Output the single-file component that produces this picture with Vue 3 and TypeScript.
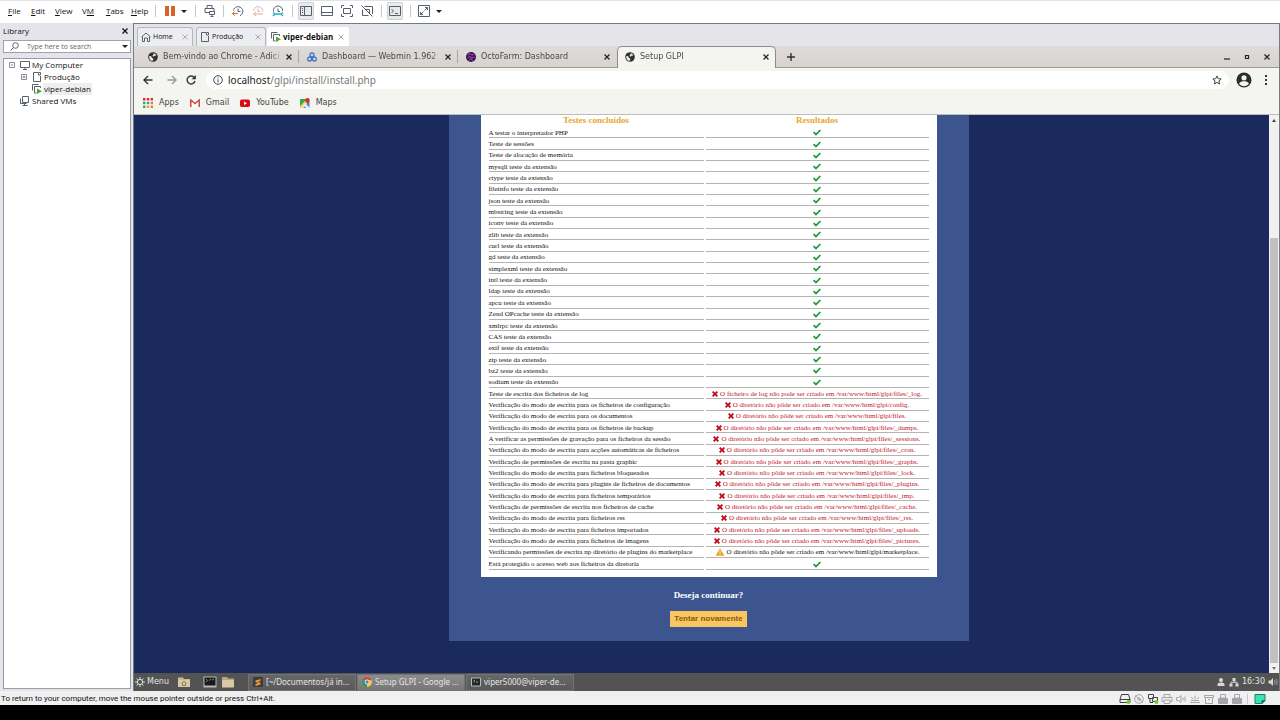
<script setup lang="ts">
import { ref } from 'vue'

type Status = 'ok' | 'error' | 'warning'
interface Check { label: string; status: Status; message?: string }

const menus = ['File', 'Edit', 'View', 'VM', 'Tabs', 'Help']
const accessKey: Record<string, number> = { File: 0, Edit: 0, View: 0, VM: 1, Tabs: 0, Help: 0 }

const search = ref('')
const address = ref('')

const ok = (label: string): Check => ({ label, status: 'ok' })
const fail = (label: string, path: string): Check => ({
  label,
  status: 'error',
  message: `O diretório não pôde ser criado em /var/www/html/glpi/${path}.`,
})

const extensions = ['mysqli', 'ctype', 'fileinfo', 'json', 'mbstring', 'iconv', 'zlib', 'curl', 'gd', 'simplexml', 'intl', 'ldap', 'apcu', 'Zend OPcache', 'xmlrpc', 'CAS', 'exif', 'zip', 'bz2', 'sodium']

const checks: Check[] = [
  ok('A testar o interpretador PHP'),
  ok('Teste de sessões'),
  ok('Teste de alocação de memória'),
  ...extensions.map((e) => ok(`${e} teste da extensão`)),
  { label: 'Teste de escrita dos ficheiros de log', status: 'error', message: 'O ficheiro de log não pode ser criado em /var/www/html/glpi/files/_log.' },
  fail('Verificação do modo de escrita para os ficheiros de configuração', 'config'),
  fail('Verificação do modo de escrita para os documentos', 'files'),
  fail('Verificação do modo de escrita para os ficheiros de backup', 'files/_dumps'),
  fail('A verificar as permissões de gravação para os ficheiros da sessão', 'files/_sessions'),
  fail('Verificação do modo de escrita para acções automáticas de ficheiros', 'files/_cron'),
  fail('Verificação de permissões de escrita na pasta graphic', 'files/_graphs'),
  fail('Verificação do modo de escrita para ficheiros bloqueados', 'files/_lock'),
  fail('Verificação do modo de escrita para plugins de ficheiros de documentos', 'files/_plugins'),
  fail('Verificação do modo de escrita para ficheiros temporários', 'files/_tmp'),
  fail('Verificação de permissões de escrita nos ficheiros de cache', 'files/_cache'),
  fail('Verificação do modo de escrita para ficheiros rss', 'files/_rss'),
  fail('Verificação do modo de escrita para ficheiros importados', 'files/_uploads'),
  fail('Verificação do modo de escrita para ficheiros de imagens', 'files/_pictures'),
  { label: 'Verificando permissões de escrita np diretório de plugins do marketplace', status: 'warning', message: 'O diretório não pôde ser criado em /var/www/html/glpi/marketplace.' },
  ok('Está protegido o acesso web aos ficheiros da diretoria'),
]

const browserTabs = [
  { title: 'Bem-vindo ao Chrome - Adici', icon: 'globe', active: false },
  { title: 'Dashboard — Webmin 1.962', icon: 'webmin', active: false },
  { title: 'OctoFarm: Dashboard', icon: 'octo', active: false },
  { title: 'Setup GLPI', icon: 'globe', active: true },
]

const tasks = [
  { title: '[~/Documentos/já in...', icon: 'sublime', active: false },
  { title: 'Setup GLPI - Google ...', icon: 'chrome', active: true },
  { title: 'viper5000@viper-de...', icon: 'term', active: false },
]
</script>

<template>
  <div class="app">
    <header class="menubar">
      <nav class="menus">
        <button v-for="m in menus" :key="m" type="button">{{ m.slice(0, accessKey[m]) }}<u>{{ m[accessKey[m]] }}</u>{{ m.slice(accessKey[m] + 1) }}</button>
      </nav>
      <div class="tools">
        <i class="sep"></i>
        <button type="button" class="pause" aria-label="Suspend"><i></i><i></i></button>
        <button type="button" class="drop power" aria-label="Power options"><i class="caret"></i></button>
        <i class="sep"></i>
        <button type="button" class="tool send" aria-label="Send keys">
          <svg viewBox="0 0 12 12"><path d="M3 3.500V.5h5v3M1 7.500v-4h9V6M1 7.500h4M5.500 6.500h5v3h-5zM8 9.500v2M6.500 11.500h3" /></svg>
        </button>
        <i class="sep"></i>
        <button type="button" class="tool clock" aria-label="Take snapshot">
          <svg viewBox="0 0 12 12"><path d="M1.500 5.500A4.700 4.700 0 1 1 8 10.700M6 3.500v3h2.500" /><path class="orange" d="M.5 8.500h5.500M2.500 6.500L.5 8.500l2 2" /></svg>
        </button>
        <button type="button" class="tool clock" aria-label="Revert snapshot">
          <svg viewBox="0 0 12 12"><path class="faint" d="M1.500 5.500A4.700 4.700 0 0 1 10.800 6.500M6 3.500v3h2" /><path class="peach" d="M1.500 9h9.500M4 7L1.500 9 4 11" /></svg>
        </button>
        <button type="button" class="tool clock" aria-label="Manage snapshots">
          <svg viewBox="0 0 12 12"><path d="M1.500 6.500A4.600 4.600 0 1 1 10.600 6M6 3.500v3h2" /><path class="teal" d="M1 7.500l2 1.500h6l2-1.500M1 11l2-2M9 9l2 2" /></svg>
        </button>
        <i class="sep"></i>
        <button type="button" class="tool boxed" aria-label="Show library">
          <svg viewBox="0 0 12 12"><path d="M.5 1.500h11v9H.5zM4.500 1.500v9M2 3.500h1M2 5.500h1M2 7.500h1" /></svg>
        </button>
        <button type="button" class="tool" aria-label="Show thumbnail bar">
          <svg viewBox="0 0 12 12"><path d="M.5 1.500h11v9H.5zM.5 7.500h11" /></svg>
        </button>
        <button type="button" class="tool" aria-label="Full screen">
          <svg viewBox="0 0 12 12"><path d="M.5 3V.5H3M9 .5h2.500V3M11.500 9v2.500H9M3 11.500H.5V9M2.500 3.500h7v5h-7z" /></svg>
        </button>
        <button type="button" class="tool" aria-label="Unity mode">
          <svg viewBox="0 0 12 12"><path d="M1.500 4.500v6h6M3.500 1.500h8V9M4.500 4.500h4v4M.5.500l11 11" /></svg>
        </button>
        <i class="sep"></i>
        <button type="button" class="tool boxed" aria-label="Console view">
          <svg viewBox="0 0 12 12"><path d="M.5 1.500h11v9H.5zM2.500 4l2 2-2 2M6 8.500h3" /></svg>
        </button>
        <i class="sep"></i>
        <button type="button" class="tool" aria-label="Stretch guest">
          <svg viewBox="0 0 12 12"><path d="M.5.5h11v11H.5zM7 2.500h2.500V5M9.500 2.500l-3 3M2.500 7v2.500H5M2.500 9.500l3-3" /></svg>
        </button>
        <button type="button" class="drop" aria-label="Stretch options"><i class="caret"></i></button>
      </div>
    </header>

    <div class="body">
      <aside class="library">
        <div class="libhead"><span>Library</span><button type="button" aria-label="Close library"><svg viewBox="0 0 6 6"><path d="M.5.5l5 5M5.500.5l-5 5" /></svg></button></div>
        <div class="search">
          <svg viewBox="0 0 9 9"><circle cx="5.500" cy="3.500" r="2.800" /><path d="M3.500 5.500L.5 8.500" /></svg>
          <input v-model="search" type="text" placeholder="Type here to search" aria-label="Type here to search" />
          <button type="button" aria-label="Search options"><i class="caret"></i></button>
        </div>
        <ul class="tree">
          <li>
            <span class="toggle"><svg viewBox="0 0 6 6"><path d="M.5.5h5v5h-5zM2 3h2" /></svg></span>
            <svg class="ti" viewBox="0 0 10 10"><path d="M.5 1.500h9v6h-9zM3 9.500h4M5 7.500v2" /></svg><span>My Computer</span>
          </li>
          <li class="child">
            <span class="toggle"><svg viewBox="0 0 6 6"><path d="M.5.5h5v5h-5zM1.500 3h3M3 1.500v3" /></svg></span>
            <svg class="ti" viewBox="0 0 10 10"><path d="M6 .5H1.500v9h7V4M6.500.5h2v2.500h-2z" /></svg><span>Produção</span>
          </li>
          <li class="child">
            <span class="toggle"></span>
            <svg class="ti" viewBox="0 0 10 10"><path d="M.5 6.500v-6h6M2.500 9V2.500h6V4M2.500 9h2" /><path class="play" d="M5 4.500v5.500l5-2.700z" /></svg><span class="chosen">viper-debian</span>
          </li>
          <li>
            <span class="toggle"></span>
            <svg class="ti" viewBox="0 0 10 10"><path d="M2.500.5h6v6h-6zM.5 2.500v5h6M4.500 7.500v2M2.500 9.500h5" /></svg><span>Shared VMs</span>
          </li>
        </ul>
      </aside>

      <main class="work">
        <div class="vmtabs">
          <div class="vmtab home">
            <svg class="ti" viewBox="0 0 10 10"><path d="M.5 5L5 1l4.500 4M1.500 4.500v5h2v-3.500h3v3.500h2v-5" /></svg><span>Home</span><button type="button" aria-label="Close Home"><svg viewBox="0 0 6 6"><path d="M.5.5l5 5M5.500.5l-5 5" /></svg></button>
          </div>
          <div class="vmtab prod">
            <svg class="ti" viewBox="0 0 10 10"><path d="M6 .5H1.500v9h7V4M6.500.5h2v2.500h-2z" /></svg><span>Produção</span><button type="button" aria-label="Close Produção"><svg viewBox="0 0 6 6"><path d="M.5.5l5 5M5.500.5l-5 5" /></svg></button>
          </div>
          <div class="vmtab current">
            <svg class="ti" viewBox="0 0 10 10"><path d="M.5 6.500v-6h6M2.500 9V2.500h6V4M2.500 9h2" /><path class="play" d="M5 4.500v5.500l5-2.700z" /></svg><span>viper-debian</span><button type="button" aria-label="Close viper-debian"><svg viewBox="0 0 6 6"><path d="M.5.5l5 5M5.500.5l-5 5" /></svg></button>
          </div>
        </div>

        <div class="guest">
          <div class="strip">
            <div v-for="t in browserTabs" :key="t.title" class="tab" :class="{ active: t.active }">
              <svg v-if="t.icon === 'globe'" viewBox="0 0 10 10"><circle cx="5" cy="5" r="4.800" fill="#2d2f31" /><path d="M1.200 4.200c1.500-.4 2.300.3 2.600 1.200.4.700 1.500.5 1.600 1.500 0 .8-.9 1-.8 2.100C2.500 8.900 1 7 1.200 4.200zM5.800 1.200c1 .2 2 .9 2.600 1.900-.7.900-1.500.5-2.200 1.100-.8.500-1.700.1-1.600-.8.300-1 1.300-1 1.200-2.200z" fill="#e8e6e3" /></svg>
              <svg v-else-if="t.icon === 'webmin'" viewBox="0 0 10 10" fill="#9dbcf0" stroke="#3b6fc4" stroke-width="1.200"><path d="M5 .7l1.900 1.200v2.200L5 5.200 3.100 4.100V1.900zM2.700 4.800l1.800 1.100v2.200L2.700 9.200.8 8.100V5.900zM7.300 4.800l1.900 1.100v2.200L7.300 9.200 5.500 8.100V5.900z" /></svg>
              <svg v-else viewBox="0 0 10 10"><circle cx="5" cy="5" r="5" fill="#3a1450" /><path d="M2 3l2-1.500L5.500 3 8 2.500M1.500 6L4 4.500 6 6l2.500-1M3 8.500l1.500-1.800L7 8.500" fill="none" stroke="#b45ac8" stroke-width="0.900" /></svg>
              <span>{{ t.title }}</span>
              <button type="button" :aria-label="'Close ' + t.title"><svg viewBox="0 0 6 6"><path d="M.5.5l5 5M5.500.5l-5 5" /></svg></button>
            </div>
            <button type="button" class="plus" aria-label="New tab"><svg viewBox="0 0 8 8"><path d="M4 0v8M0 4h8" /></svg></button>
            <div class="winbtns">
              <button type="button" aria-label="Minimize"><svg viewBox="0 0 6 6"><path d="M0 5h6" /></svg></button>
              <button type="button" aria-label="Maximize"><svg viewBox="0 0 6 6"><path d="M1.500 1.500h3v3h-3z" /></svg></button>
              <button type="button" aria-label="Close window"><svg viewBox="0 0 6 6"><path d="M.5.5l5 5M5.500.5l-5 5" /></svg></button>
            </div>
          </div>

          <div class="toolbar">
            <button type="button" aria-label="Back"><svg viewBox="0 0 10 10"><path d="M9.500 5H1M5 1L1 5l4 4" /></svg></button>
            <button type="button" class="dim" aria-label="Forward"><svg viewBox="0 0 10 10"><path d="M.5 5H9M5 1l4 4-4 4" /></svg></button>
            <button type="button" class="reload" aria-label="Reload"><svg viewBox="0 0 10 10"><path d="M8.300 2.500A4 4 0 1 0 9 6" /><path class="solid" d="M9.800 0v4.200H5.600z" /></svg></button>
            <div class="omnibox">
              <svg viewBox="0 0 10 10"><circle cx="5" cy="5" r="4.300" /><path d="M5 4.300v3.200M5 2.400v1" /></svg>
              <label class="url"><span>localhost<em>/glpi/install/install.php</em></span><input v-model="address" type="text" aria-label="Address" /></label>
              <button type="button" aria-label="Bookmark this page"><svg viewBox="0 0 10 10"><path d="M5 .9l1.200 2.800 3 .3-2.300 2 .7 3L5 7.400 2.400 9l.7-3L.8 4l3-.3z" /></svg></button>
            </div>
            <button type="button" class="avatar" aria-label="Profile"><svg viewBox="0 0 16 16"><circle cx="8" cy="8" r="7.500" fill="#2b2c2e" /><circle cx="8" cy="5.800" r="2.600" fill="#f4f4f0" /><path d="M3 11.800C4 9.600 6 9.300 8 9.300s4 .3 5 2.500c-1.300 1.600-3 2.400-5 2.400s-3.700-.8-5-2.400z" fill="#f4f4f0" /></svg></button>
            <button type="button" class="dots" aria-label="Chrome menu"><i></i><i></i><i></i></button>
          </div>

          <nav class="bookmarks">
            <a href="#apps"><svg viewBox="0 0 10 10"><path fill="#d93025" d="M0 0h2.400v2.400H0zM3.800 0h2.400v2.400H3.800zM7.600 0H10v2.400H7.600z" /><path fill="#34a853" d="M0 3.800h2.400v2.400H0z" /><path fill="#4285f4" d="M3.800 3.800h2.400v2.400H3.800z" /><path fill="#d98c25" d="M7.600 3.800H10v2.400H7.600zM7.600 7.600H10V10H7.600z" /><path fill="#34a853" d="M0 7.600h2.400V10H0z" /><path fill="#e0a82e" d="M3.800 7.600h2.400V10H3.800z" /></svg>Apps</a>
            <a href="#gmail"><svg viewBox="0 0 10 10"><path fill="#fff" d="M0 1.500h10v7.500H0z" /><path fill="none" stroke="#d5453a" stroke-width="1.500" d="M.8 9V2L5 5.500 9.200 2v7" /></svg>Gmail</a>
            <a href="#youtube"><svg viewBox="0 0 10 10"><rect y="1.500" width="10" height="7.500" rx="1.800" fill="#d80c18" /><path d="M4 3.500v3.500l3-1.750z" fill="#fff" /></svg>YouTube</a>
            <a href="#maps"><svg viewBox="0 0 10 10"><path fill="#34a853" d="M0 1h8L0 9z" /><path fill="#4285f4" d="M9.500 3v7H3z" /><path fill="#f2d04b" d="M0 8l7-7 2 1-8 8H0z" /><path fill="#e8eaed" d="M3 7l2-2 5 5H6z" /><path fill="#d93025" d="M7.500 0A2.300 2.300 0 0 1 9.800 2.300C9.800 4 8 4.500 7.500 6.500 7 4.500 5.200 4 5.200 2.300A2.300 2.300 0 0 1 7.500 0z" /></svg>Maps</a>
          </nav>

          <div class="viewport">
            <div class="page">
              <section class="panel">
                <div class="sheet">
                  <table>
                    <colgroup><col class="c1" /><col class="c2" /></colgroup>
                    <thead><tr><th scope="col">Testes concluídos</th><th scope="col">Resultados</th></tr></thead>
                    <tbody>
                      <tr v-for="c in checks" :key="c.label">
                        <td>{{ c.label }}</td>
                        <td>
                          <div class="result" :class="c.status">
                            <svg v-if="c.status === 'ok'" viewBox="0 0 8 7" role="img" aria-label="OK"><path d="M0 3.800l1.200-1.200 1.800 1.700L6.800.4 8 1.600 3 6.700z" fill="#1f9a3a" /></svg>
                            <svg v-else-if="c.status === 'error'" class="x" viewBox="0 0 6 6" role="img" aria-label="Erro"><path d="M0 1.300L1.300 0 3 1.700 4.700 0 6 1.300 4.300 3 6 4.700 4.700 6 3 4.300 1.300 6 0 4.700 1.700 3z" fill="#c00a1c" /></svg>
                            <svg v-else class="warn" viewBox="0 0 10 9" role="img" aria-label="Aviso"><path d="M5 .2L9.900 8.800H.1z" fill="#f0a020" /><path d="M5 3v3M5 6.800v1" stroke="#fff" /></svg>
                            <span v-if="c.message">{{ c.message }}</span>
                          </div>
                        </td>
                      </tr>
                    </tbody>
                  </table>
                </div>
                <h3>Deseja continuar?</h3>
                <button type="button" class="retry">Tentar novamente</button>
              </section>
            </div>
            <div class="scroll"><i class="arrow up"></i><div class="track"><div class="thumb"></div></div><i class="arrow"></i></div>
          </div>

          <div class="taskbar">
            <button type="button" class="start"><svg viewBox="0 0 10 10"><circle cx="5" cy="5" r="2.600" /><path d="M5 0v2M5 8v2M0 5h2M8 5h2M1.500 1.500l1.400 1.400M7.100 7.100l1.400 1.400M8.500 1.500L7.100 2.900M2.900 7.100L1.500 8.500" /></svg>Menu</button>
            <div class="launch">
              <button type="button" aria-label="Home folder"><svg viewBox="0 0 14 12"><path d="M1 1.500h5l1 1.500h6v8H1z" fill="#cbb994" /><path d="M1 4h12v7H1z" fill="#d9c8a4" /><path d="M4.500 7.500L7 5.500l2.500 2M5.500 7.500v2h3v-2" fill="none" stroke="#85775a" /></svg></button>
              <button type="button" aria-label="Terminal"><svg viewBox="0 0 14 12"><path d="M.5.5h13v11H.5z" fill="#b8bab6" /><path d="M1.500 1.500h11v8h-11z" fill="#161c1d" /><path d="M3 3l1.500 1.500L3 6M6 4.500l2-1.500M9 4l2-1" fill="none" stroke="#8fb08c" stroke-width="0.800" /></svg></button>
              <button type="button" aria-label="Files"><svg viewBox="0 0 14 12"><path d="M1 1h5l1 1.500h6V11H1z" fill="#b9a67f" /><path d="M1 4h12v7.500H1z" fill="#d9c8a4" /></svg></button>
            </div>
            <button v-for="t in tasks" :key="t.title" type="button" class="task" :class="{ on: t.active }">
              <svg v-if="t.icon === 'sublime'" viewBox="0 0 10 10"><rect width="10" height="10" rx="1" fill="#3b3b3b" /><path d="M2.500 3.500L7.500 2v2L4.500 5l3 .8V7.500l-5 1.500V7l3-1-3-.8z" fill="#f29a2e" /></svg>
              <svg v-else-if="t.icon === 'chrome'" viewBox="0 0 10 10"><path d="M5 5L.7 2.500a5 5 0 0 1 8.600 0z" fill="#db4437" /><path d="M5 5l4.300-2.500A5 5 0 0 1 5 10z" fill="#f4c53a" /><path d="M5 5v5A5 5 0 0 1 .7 2.500z" fill="#2b9c55" /><circle cx="5" cy="5" r="2.400" fill="#fff" /><circle cx="5" cy="5" r="1.800" fill="#4a84e0" /></svg>
              <svg v-else viewBox="0 0 10 10"><path d="M.5 1h9v8h-9z" fill="#24292a" stroke="#b8bab6" /><path d="M2.500 3l1.500 1-1.500 1M5 5h2" fill="none" stroke="#a9c2a5" stroke-width="0.800" /></svg>
              <span>{{ t.title }}</span>
            </button>
            <div class="tray">
              <svg viewBox="0 0 10 10"><circle cx="5" cy="3" r="2" /><path d="M1.500 9V7.500C1.500 6 3 5.500 5 5.500s3.500.5 3.500 2V9z" /></svg>
              <svg viewBox="0 0 10 10"><path d="M3.500 1h3v3h-3zM.5 6.500h3v3h-3zM6.500 6.500h3v3h-3z" /><path d="M5 4v1.200M2 6.500V5.300h6v1.200" fill="none" stroke="#d8d8d8" /></svg>
              <time>16:30</time>
              <svg viewBox="0 0 10 10"><path d="M.5 3.500h2l2.500-2.500v8L2.500 6.500h-2z" /><path d="M6.300 3.200c.8 1 .8 2.600 0 3.600M8 2c1.400 1.600 1.400 4.400 0 6" fill="none" stroke="#a5a5a5" /></svg>
            </div>
          </div>
        </div>
      </main>
    </div>

    <footer class="status">
      <span>To return to your computer, move the mouse pointer outside or press Ctrl+Alt.</span>
      <div class="devices">
        <svg viewBox="0 0 12 10"><path d="M2.500.5h7l1.500 5v3H1v-3zM1 5.500h10" /><circle class="led" cx="9.500" cy="8" r="1.900" /></svg>
        <svg class="off" viewBox="0 0 12 10"><circle cx="6" cy="5" r="4.300" /><circle cx="6" cy="5" r="1.300" /><path d="M2 1.500l8 7" /></svg>
        <svg viewBox="0 0 12 10"><path d="M1.500.5h5v4h-5zM5.500 3.500h5v4h-5zM3 4.500v4h3" /><circle class="led" cx="9.500" cy="8" r="1.900" /></svg>
        <svg class="off" viewBox="0 0 12 10"><path d="M3 3.500v-3h6v3M3 7.500H1v-4h10v4H9M3 6h6v3.500H3z" /></svg>
        <svg class="off" viewBox="0 0 12 10"><path d="M1.500 3.500h2L6 1.500v7l-2.500-2h-2zM8 3.500v3M10 2.500v5" /></svg>
        <svg class="off" viewBox="0 0 12 10"><path d="M1 8.500h10M2 6.500h8M6 1.500v4M2 3l2 2M10 3L8 5" /></svg>
        <svg class="off" viewBox="0 0 12 10"><path d="M1.500 1.500h9v2h-9zM2.500 3.500v6h7v-6M5 5.500h2" /></svg>
        <svg class="off usb" viewBox="0 0 12 10"><path d="M3.500.5h5V4h-5z" /><path class="fill" d="M1.500 4.500h9v5h-9z" /></svg>
        <svg class="off usb" viewBox="0 0 12 10"><path d="M3.500.5h5V4h-5z" /><path class="fill" d="M1.500 4.500h9v5h-9z" /></svg>
        <i class="sep"></i>
        <svg class="note" viewBox="0 0 12 10"><path d="M1 .5h10v6l-3 3H1z" fill="#3fe0b0" stroke="#14806a" /><path d="M8 9.500v-3h3z" fill="#17594d" stroke="#14806a" /></svg>
      </div>
    </footer>
  </div>
</template>

<style>
body { margin: 0; background: #000; }
</style>

<style scoped>
.app {
  display: flex;
  flex-direction: column;
  box-sizing: border-box;
  height: 100vh;
  padding-bottom: 15px;
  background: #000;
  color: #111;
  font: 8px/12px "Open Sans", "Noto Sans", sans-serif;
  overflow: hidden;
}
button { border: 0; padding: 0; margin: 0; background: none; font: inherit; color: inherit; display: flex; align-items: center; justify-content: center; }
svg { display: block; flex: none; fill: none; }
i { display: block; flex: none; }
input { border: 0; padding: 0; background: none; font: inherit; outline: 0; min-width: 0; }
.caret { border: 3px solid transparent; border-top-color: #222; border-bottom: 0; }

.menubar { display: flex; align-items: center; height: 23px; box-sizing: border-box; padding-bottom: 2px; border-top: 1px solid #e2e2e2; background: #fff; }
.menus { display: grid; grid-template-columns: 23px 24px 27px 24px 25px 24px; padding-left: 8px; }
.menus button { justify-content: flex-start; white-space: pre; }
.tools { display: flex; align-items: center; }
.sep { width: 1px; height: 12px; background: #c8c8c8; }
.pause { width: 28px; gap: 2px; }
.pause i { width: 4px; height: 10px; background: #d9622b; }
.drop { width: 10px; height: 16px; }
.power { margin: 0 6px 0 -5px; }
.tool { width: 20px; height: 18px; }
.tool svg { width: 12px; height: 12px; stroke: #55606c; }
.send { width: 27px; }
.boxed { width: 16px; margin: 0 3px 0 5px; background: #e9eaec; border-radius: 2px; box-shadow: inset 0 0 0 1px #cfd2d5; }
.tool + .sep { margin-left: 4px; }
.send + .sep { margin-left: 0; }
.sep + .clock { margin-left: 4px; }
.sep + .tool:not(.boxed):not(.clock):not(.send) { margin-left: 3px; }
.tool .orange { stroke: #e0672e; }
.tool .peach { stroke: #efaa86; }
.tool .faint { stroke: #bfc3c7; }
.tool .teal { stroke: #27aab8; stroke-width: 1.5; }

.body { display: flex; flex: 1; min-height: 0; background: #e4e5ea; }
.library { display: flex; flex-direction: column; flex: none; width: 128px; padding: 0 2px 2px 3px; }
.libhead { display: flex; align-items: center; justify-content: space-between; height: 17px; padding-right: 3px; box-sizing: border-box; padding-bottom: 1px; }
.libhead svg { width: 6px; height: 6px; stroke: #111; stroke-width: 1.3; }
.search { display: flex; align-items: center; height: 11px; border: 1px solid #a0a2a8; background: #fff; margin-bottom: 5px; }
.search svg { width: 9px; height: 9px; margin: 0 8px 0 6px; stroke: #666; }
.search input { flex: 1; color: #555; height: 11px; font-size: 7px; }
.search input::placeholder { color: #666; opacity: 1; }
.search button { width: 11px; }
.tree { flex: 1; margin: 0; padding: 0 0 0 5px; list-style: none; border: 1px solid #9a9ca2; background: #fff; }
.tree li { display: flex; align-items: center; height: 12px; }
.tree .child { padding-left: 12px; }
.toggle { width: 11px; }
.toggle svg { width: 6px; height: 6px; stroke: #8a8f98; }
.ti { width: 10px; height: 10px; margin-right: 2px; stroke: #59636f; }
.tree span:last-child { padding: 0 1px; }
.tree .ti { margin-right: 1px; }
.chosen { background: #eee; }
.play { fill: #4caa2c; stroke: none; }

.work { display: flex; flex-direction: column; flex: 1; min-width: 0; border: solid #777a80; border-width: 1px 1px 0; }
.vmtabs { display: flex; align-items: flex-end; height: 22px; padding-left: 3px; }
.vmtab { display: flex; align-items: center; box-sizing: border-box; height: 19px; padding: 0 4px 0 3px; border: 1px solid #b5b7bd; border-bottom: 0; border-radius: 3px 3px 0 0; background: #ecedf1; font-size: 7px; }
.vmtab span { flex: 1; }
.vmtab button svg { width: 6px; height: 6px; stroke: #a9abaf; }
.home { width: 56px; margin-right: 3px; }
.prod { width: 70px; margin-right: 1px; }
.current { width: 82px; background: #fff; border-color: #fff; font-size: 8px; font-weight: bold; }

.guest { display: flex; flex-direction: column; flex: 1; min-height: 0; font-family: "DejaVu Sans", sans-serif; }
.strip { display: flex; height: 21px; padding-left: 6px; border-bottom: 1px solid #a09b98; background: linear-gradient(#dedbd9, #d8d3d0); color: #4a4a4a; }
.tab { position: relative; display: flex; align-items: center; flex: none; box-sizing: border-box; width: 159px; padding: 0 5px 0 8px; }
.tab > svg { width: 10px; height: 10px; margin-right: 5px; }
.tab span { flex: 1; white-space: nowrap; mask-image: linear-gradient(90deg, #000 90%, transparent); }
.tab button { width: 11px; height: 12px; }
.tab button svg, .winbtns svg { width: 6px; height: 6px; stroke: #222; stroke-width: 1.2; }
.tab:not(:has(+ .active)):not(.active) { background: linear-gradient(#aaa6a3, #aaa6a3) right center / 1px 13px no-repeat; }
.tab.active { height: 22px; margin-bottom: -1px; background: #f4f4f0; border: 1px solid #8f8b88; border-bottom: 0; border-radius: 5px 5px 0 0; padding: 0 4px 1px 7px; }
.plus { width: 30px; }
.plus svg { width: 8px; height: 8px; stroke: #333; stroke-width: 1.4; }
.winbtns { display: flex; margin-left: auto; padding-right: 2px; }
.winbtns button { width: 20px; }

.toolbar { display: flex; align-items: center; height: 24px; padding-left: 4px; background: #f4f4f0; }
.toolbar button { width: 20px; height: 18px; }
.toolbar svg { width: 10px; height: 10px; stroke: #333; stroke-width: 1.4; }
.toolbar .dim { width: 28px; }
.toolbar .dim svg { stroke: #999; }
.toolbar .reload { width: 10px; margin-right: 10px; }
.toolbar .solid { fill: #333; stroke: none; }
.toolbar .omnibox { display: flex; align-items: center; flex: 1; height: 18px; padding: 0 2px 0 7px; border-radius: 9px; background: #fff; }
.toolbar .omnibox svg { stroke-width: 1; stroke: #444; }
.url { display: flex; flex: 1; align-items: center; margin-left: 5px; font: 10px/14px "Noto Sans", sans-serif; color: #222; }
.url em { font-style: normal; color: #777; }
.url input { flex: 1; }
.toolbar .avatar { width: 16px; margin-left: 7px; }
.toolbar .avatar svg { width: 16px; height: 16px; stroke: none; }
.toolbar .dots { flex-direction: column; gap: 2px; width: 27px; }
.dots i { width: 2px; height: 2px; background: #333; }

.bookmarks { display: flex; align-items: center; gap: 11px; height: 21px; padding: 0 0 1px 9px; border-bottom: 1px solid #bdbdbd; background: #f4f4f0; }
.bookmarks a { display: flex; align-items: center; gap: 6px; color: #444; text-decoration: none; }
.bookmarks svg { width: 10px; height: 10px; }

.viewport { display: flex; flex: 1; min-height: 0; background: #1b2a5c; overflow: hidden; }
.page { display: flex; justify-content: center; align-items: flex-start; flex: 1; padding-left: 14px; font-family: "Liberation Serif", serif; }
.panel { display: flex; flex-direction: column; align-items: center; box-sizing: border-box; width: 520px; padding: 0 32px 14px; background: #3d558f; }
.sheet { align-self: stretch; padding: 0 6px 7px; background: #fff; }
table { width: 100%; height: 455px; table-layout: fixed; border-collapse: separate; border-spacing: 2px 0; font-size: 7px; line-height: 8px; color: #111; }
.c1 { width: 215px; }
th { padding: 0 0 2px; font-size: 9px; line-height: 10px; color: #e9a52e; }
td { padding: 1px 0 0; border-bottom: 1px solid #b4b4b4; white-space: nowrap; vertical-align: middle; }
.result { display: flex; align-items: center; justify-content: center; gap: 2px; height: 8px; }
.result svg { width: 8px; height: 7px; }
.result svg.x { width: 6px; height: 6px; }
.result svg.warn { width: 10px; height: 8px; }
.error { color: #c4122a; }
h3 { margin: 12px 0 9px; font-size: 9px; line-height: 13px; color: #fff; }
.retry { height: 16px; padding: 0 4px; background: #fac662; color: #8a5a0c; font: bold 8px/16px "Liberation Sans", sans-serif; }
.scroll { display: flex; flex-direction: column; align-items: center; width: 10px; background: #f1f1f1; }
.arrow { margin: 4px 0 3px; border: 2px solid transparent; border-top: 3px solid #777; border-bottom: 0; }
.arrow.up { border-top: 0; border-bottom: 3px solid #444; }
.track { flex: 1; width: 8px; display: flex; flex-direction: column; justify-content: flex-end; }
.thumb { height: 79%; background: #c1c1c1; }

.taskbar { display: flex; align-items: center; height: 18px; background: #535353; color: #e4e4e4; }
.start { width: 42px; padding-left: 1px; box-sizing: border-box; justify-content: flex-start; gap: 2px; }
.start svg { width: 10px; height: 10px; stroke: #e4e4e4; }
.launch { display: flex; width: 71px; padding-left: 1px; gap: 4px; }
.launch button:first-child { margin-right: 8px; }
.launch svg { width: 14px; height: 12px; }
.task { width: 108px; height: 17px; margin-right: 1px; padding: 0 0 0 4px; box-sizing: border-box; justify-content: flex-start; gap: 3px; border: 1px solid #747474; background: linear-gradient(#666, #5a5a5a); font-family: "Noto Sans", sans-serif; }
.task.on { background: linear-gradient(#8c8c8c, #777); }
.task svg { width: 10px; height: 10px; }
.task span { white-space: nowrap; }
.tray { display: flex; align-items: center; gap: 3px; margin-left: auto; padding-right: 1px; }
.tray svg { width: 10px; height: 10px; fill: #d8d8d8; }

.status { display: flex; align-items: center; height: 14px; background: #f0f0f0; font-family: Roboto, sans-serif; padding: 0 14px 0 1px; }
.status span { padding-top: 2px; }
.devices { display: flex; align-items: center; gap: 2px; margin-left: auto; padding-top: 1px; }
.devices svg { width: 12px; height: 10px; stroke: #3c4248; }
.devices .off { stroke: #a2a6aa; }
.devices .led { fill: #63cf33; stroke: none; }
.devices .fill { fill: #a2a6aa; }
.devices .sep { margin: 0 4px 0 2px; height: 10px; }
</style>
